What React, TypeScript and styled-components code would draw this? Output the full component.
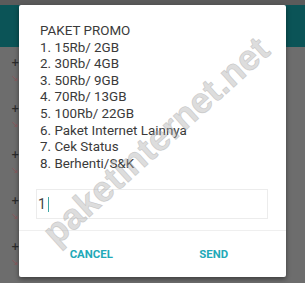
import React from "react";
import styled, { createGlobalStyle } from "styled-components";

const Global = createGlobalStyle`
  html, body { margin: 0; padding: 0; }
  body { width: 305px; height: 283px; overflow: hidden; font-family: Roboto, "Noto Sans", sans-serif; }
`;

const Screen = styled.div`
  position: relative;
  width: 305px;
  height: 283px;
  background: #6d6d6d;
  display: flex;
  flex-direction: column;
  overflow: hidden;
`;

const StatusStrip = styled.div`
  height: 5px;
  background: #5b5b5b;
  flex: none;
`;

const AppBar = styled.div`
  height: 42px;
  background: #0b5457;
  flex: none;
`;

const List = styled.div`
  display: flex;
  flex-direction: column;
  padding: 9px 0 0 11px;
`;

const ListItem = styled.div`
  height: 46px;
  display: flex;
  flex-direction: column;
  font-family: "DejaVu Sans", sans-serif;
`;

const Plus = styled.span`
  font-size: 10px;
  line-height: 14px;
  color: #2a2a2a;
  font-weight: bold;
`;

const Arrow = styled.span`
  font-size: 9px;
  line-height: 12px;
  margin-top: 2px;
  color: #8a5a5e;
`;

const Dialog = styled.div`
  position: absolute;
  left: 19px;
  top: 5px;
  width: 267px;
  height: 272px;
  background: #fff;
  border-radius: 2px;
  box-shadow: 0 2px 5px rgba(0, 0, 0, 0.45);
  display: flex;
  flex-direction: column;
  overflow: hidden;
`;

const Message = styled.div`
  padding: 18px 0 0 21px;
  font-size: 13.4px;
  line-height: 16.6px;
  color: #3a3a3a;
`;

const Line = styled.div`
  white-space: pre;
`;

const InputBox = styled.div`
  margin: 17px 18px 0 17px;
  height: 30px;
  border: 1px solid #ececec;
  box-sizing: border-box;
  display: flex;
  align-items: center;
  padding-left: 1px;
  font-size: 14px;
  color: #444;
`;

const Caret = styled.span`
  display: inline-block;
  width: 1.5px;
  height: 15px;
  background: #3fa7a6;
  margin-left: 2px;
`;

const Divider = styled.div`
  margin-top: 11px;
  height: 1px;
  background: #efefef;
`;

const Buttons = styled.div`
  flex: 1;
  display: grid;
  grid-template-columns: 1fr 1fr;
  padding: 0 11px;
`;

const Btn = styled.div`
  display: flex;
  align-items: center;
  justify-content: center;
  font-size: 11.4px;
  font-weight: 700;
  color: #22a9b8;
`;

const Watermark = styled.div`
  position: absolute;
  left: 137px;
  top: 136px;
  transform: translate(-50%, -50%) rotate(-42deg);
  font-family: "Liberation Sans", Arial, sans-serif;
  font-weight: 700;
  font-size: 36px;
  color: rgba(165, 165, 165, 0.4);
  -webkit-text-stroke: 0.8px rgba(165, 165, 165, 0.4);
  white-space: nowrap;
  pointer-events: none;
`;

const lines = [
  "PAKET PROMO",
  "1. 15Rb/ 2GB",
  "2. 30Rb/ 4GB",
  "3. 50Rb/ 9GB",
  "4. 70Rb/ 13GB",
  "5. 100Rb/ 22GB",
  "6. Paket Internet Lainnya",
  "7. Cek Status",
  "8. Berhenti/S&K",
];

export default function App() {
  return (
    <>
      <Global />
      <Screen>
        <StatusStrip />
        <AppBar />
        <List>
          {[0, 1, 2, 3, 4].map((i) => (
            <ListItem key={i}>
              <Plus>+</Plus>
              <Arrow>↘</Arrow>
            </ListItem>
          ))}
        </List>
        <Dialog>
          <Message>
            {lines.map((l) => (
              <Line key={l}>{l}</Line>
            ))}
          </Message>
          <InputBox>
            1<Caret />
          </InputBox>
          <Divider />
          <Buttons>
            <Btn>CANCEL</Btn>
            <Btn>SEND</Btn>
          </Buttons>
          <Watermark>paketinternet.net</Watermark>
        </Dialog>
      </Screen>
    </>
  );
}
